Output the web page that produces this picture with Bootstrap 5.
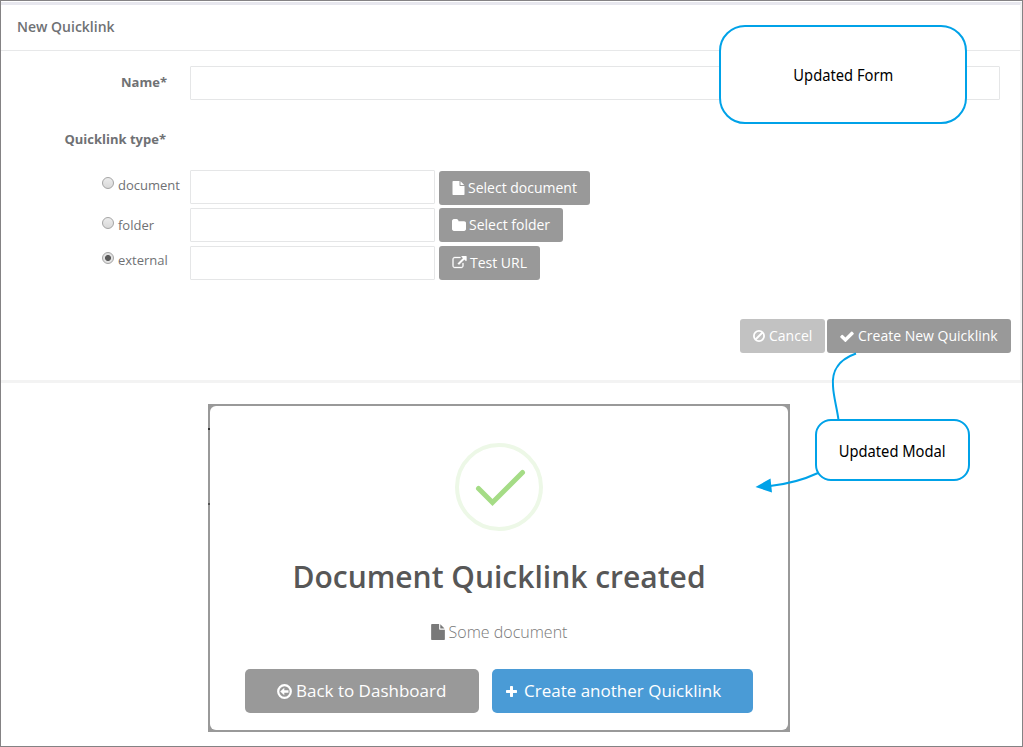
<!DOCTYPE html>
<html lang="en">
<head>
<meta charset="utf-8">
<title>New Quicklink</title>
<link href="https://cdn.jsdelivr.net/npm/bootstrap@5.3.0/dist/css/bootstrap.min.css" rel="stylesheet">
<style>
body{font-family:"Open Sans",sans-serif;font-size:13px;color:#6f7174;background:#fff}
.page{width:1023px;height:747px;border:1px solid #848284;padding-top:1px;overflow:hidden}
.panel{height:381px;border-top:3px solid #e7e7ee;border-right:2px solid #f3f3f3;border-bottom:3px solid #f3f3f3}
.panel-title{height:46px;border-bottom:1px solid #e7e8e9;padding-left:16px;font-size:14px;font-weight:600;line-height:43px}
.lbl{width:188px;padding-right:22px;font-weight:700;line-height:20px}
.field{height:34px;border:1px solid #e5e6e7;border-radius:1px;padding:0;box-shadow:none}
.opt{height:38px;padding-left:101px}
.opt label{width:88px;line-height:20px}
.opt input[type=radio]{appearance:none;width:12px;height:12px;border:1px solid #a4a4a4;border-radius:50%;background:linear-gradient(#ececec,#d9d9d9);margin:2px 4px 0 0;flex:none}
.opt input[type=radio]:checked{background:radial-gradient(circle,#5a5a5a 0 2.6px,#e2e2e2 3.4px)}
.opt .field{width:245px}
.act{height:34px;border:0;border-radius:3px;background:#999;color:#fff;font-size:14px;line-height:34px;padding:0 0 0 13px;text-align:left;white-space:nowrap;display:flex;align-items:center}
.act svg,.sub svg{flex:none;fill:currentColor}
.dlg{width:582px;height:328px;margin:21px 0 0 207px;padding:2px;background:linear-gradient(#333,#333) 0 24px/2px 2px no-repeat,linear-gradient(#555,#555) 0 99px/2px 2px no-repeat,#999}
.dlg-in{height:324px;border-radius:6px;background:#fff;padding-top:37px}
.dlg h2{font-size:30px;font-weight:600;line-height:40px;color:#575757;margin:26px 0 0}
.sub{font-size:16px;font-weight:300;color:#797979;line-height:24px;margin-top:23px}
.big{height:44px;font-size:17px;border-radius:5px}
.note{position:absolute;border:2px solid #00a2e8;background:#fff;color:#000;font-family:"Noto Sans",sans-serif;font-size:16px;display:flex;align-items:center;justify-content:center}
.note span{transform:scaleX(.92);white-space:nowrap}
.wire{position:absolute;left:750px;top:345px;pointer-events:none}
</style>
</head>
<body>
<svg width="0" height="0" class="position-absolute">
<symbol id="file" viewBox="128 0 1536 1792"><path d="M1152 512v-472q22 14 36 28l408 408q14 14 28 36h-472zm-128 32q0 40 28 68t68 28h544v1056q0 40-28 68t-68 28h-1344q-40 0-68-28t-28-68v-1600q0-40 28-68t68-28h800v544z"/></symbol>
<symbol id="folder" viewBox="64 128 1664 1408"><path d="M1728 608v704q0 92-66 158t-158 66h-1216q-92 0-158-66t-66-158v-960q0-92 66-158t158-66h320q92 0 158 66t66 158v32h672q92 0 158 66t66 158z"/></symbol>
<symbol id="ext" viewBox="0 0 1792 1792"><path stroke="#fff" stroke-width="40" d="M1408 928v320q0 119-84.5 203.5t-203.5 84.5h-832q-119 0-203.5-84.5t-84.5-203.5v-832q0-119 84.5-203.5t203.5-84.5h704q14 0 23 9t9 23v64q0 14-9 23t-23 9h-704q-66 0-113 47t-47 113v832q0 66 47 113t113 47h832q66 0 113-47t47-113v-320q0-14 9-23t23-9h64q14 0 23 9t9 23zm384-864v512q0 26-19 45t-45 19-45-19l-176-176-652 652q-10 10-23 10t-23-10l-114-114q-10-10-10-23t10-23l652-652-176-176q-19-19-19-45t19-45 45-19h512q26 0 45 19t19 45z"/></symbol>
<symbol id="check" viewBox="121 270 1550 1252"><path d="M1671 566q0 40-28 68l-724 724-136 136q-28 28-68 28t-68-28l-136-136-362-362q-28-28-28-68t28-68l136-136q28-28 68-28t68 28l294 295 656-657q28-28 68-28t68 28l136 136q28 28 28 68z"/></symbol>
<symbol id="plus" viewBox="192 128 1408 1408"><path d="M1600 736v192q0 40-28 68t-68 28h-416v416q0 40-28 68t-68 28h-192q-40 0-68-28t-28-68v-416h-416q-40 0-68-28t-28-68v-192q0-40 28-68t68-28h416v-416q0-40 28-68t68-28h192q40 0 68 28t28 68v416h416q40 0 68 28t28 68z"/></symbol>
</svg>
<div class="page position-relative">
  <section class="panel">
    <div class="panel-title">New Quicklink</div>
    <form>
      <div class="d-flex" style="padding-top:15px">
        <div class="lbl text-end" style="padding-top:6px">Name*</div>
        <input class="form-control field" style="width:810px;margin-left:1px" aria-label="Name">
      </div>
      <div class="lbl text-end" style="margin-top:29px;padding-right:23px">Quicklink type*</div>
      <div class="opt d-flex" style="margin-top:21px">
        <label class="d-flex" style="padding-top:5px"><input type="radio" name="t"><span>document</span></label>
        <input class="form-control field" aria-label="Document">
        <button type="button" class="act" style="width:151px;margin:1px 0 0 4px"><svg width="13" height="14"><use href="#file"/></svg><span style="margin-left:3px">Select document</span></button>
      </div>
      <div class="opt d-flex">
        <label class="d-flex" style="padding-top:7px"><input type="radio" name="t"><span>folder</span></label>
        <input class="form-control field" aria-label="Folder">
        <button type="button" class="act" style="width:124px;margin-left:4px"><svg width="14" height="12"><use href="#folder"/></svg><span style="margin-left:3px">Select folder</span></button>
      </div>
      <div class="opt d-flex">
        <label class="d-flex" style="padding-top:4px"><input type="radio" name="t" checked><span>external</span></label>
        <input class="form-control field" aria-label="External">
        <button type="button" class="act" style="width:101px;margin-left:4px"><svg width="15" height="14"><use href="#ext"/></svg><span style="margin-left:3px">Test URL</span></button>
      </div>
      <div class="d-flex justify-content-end" style="margin-top:35px;padding-right:9px;gap:2px">
        <button type="button" class="act" style="width:85px;background:#c2c2c2"><svg width="12" height="12" viewBox="0 0 12 12"><g fill="none" stroke="#fff" stroke-width="1.8"><circle cx="6" cy="6" r="5.1"/><path d="M2.5 9.5l7-7"/></g></svg><span style="margin-left:4px">Cancel</span></button>
        <button type="button" class="act" style="width:184px"><svg width="14" height="11"><use href="#check"/></svg><span style="margin-left:4px">Create New Quicklink</span></button>
      </div>
    </form>
  </section>
  <section class="dlg">
    <div class="dlg-in text-center">
      <svg width="88" height="88" viewBox="0 0 88 88" class="d-block mx-auto" fill="none"><circle cx="44" cy="44" r="42" stroke="#edf8e7" stroke-width="4"/><path d="M23.500 45.500l14 14L67.500 29.500" stroke="#a5dc86" stroke-width="5" stroke-linecap="round"/></svg>
      <h2>Document Quicklink created</h2>
      <div class="sub d-flex justify-content-center align-items-center"><svg width="14" height="16"><use href="#file"/></svg><span style="margin-left:4px">Some document</span></div>
      <div class="d-flex" style="margin:25px 0 0 35px;gap:13px">
        <button type="button" class="act big" style="width:234px;padding-left:32px"><svg width="15" height="15" viewBox="0 0 15 15"><circle cx="7.500" cy="7.500" r="6.300" fill="none" stroke="#fff" stroke-width="2.200"/><path d="M3.200 7.500L7.300 3.700V6.300H11.500V8.700H7.300V11.300Z"/></svg><span style="margin-left:4px">Back to Dashboard</span></button>
        <button type="button" class="act big" style="width:261px;padding-left:14px;background:#4a9bd6"><svg width="11" height="11"><use href="#plus"/></svg><span style="margin-left:7px">Create another Quicklink</span></button>
      </div>
    </div>
  </section>
  <div class="note" style="left:718px;top:24px;width:248px;height:99px;border-radius:26px"><span>Updated Form</span></div>
  <svg class="wire" width="110" height="150" viewBox="751 346 110 150" fill="none"><path d="M856 353.500C835 361 832 374 833 386C833.500 397 837 408 838.500 420M818 473C803 480 788 484 770 486" stroke="#00a2e8" stroke-width="2"/><path d="M755.500 487L770.500 478.500L772 492.500Z" fill="#00a2e8"/></svg>
  <div class="note" style="left:814px;top:418px;width:155px;height:62px;border-radius:16px"><span style="position:relative;top:1px">Updated Modal</span></div>
</div>
<script src="https://cdn.jsdelivr.net/npm/bootstrap@5.3.0/dist/js/bootstrap.bundle.min.js"></script>
</body>
</html>
